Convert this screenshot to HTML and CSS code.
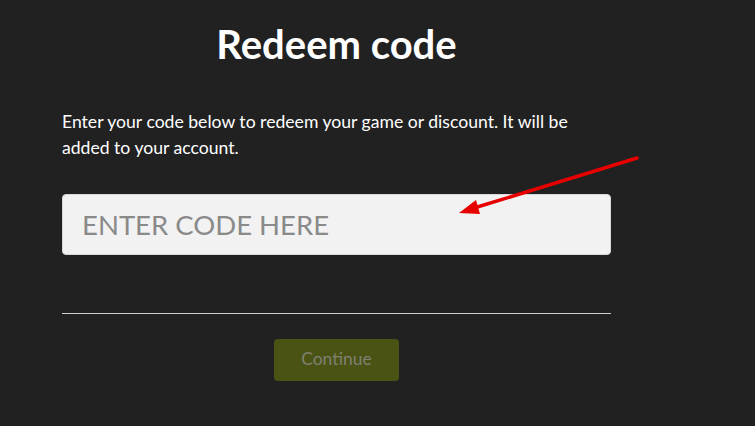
FILE: index.html
```html
<!DOCTYPE html>
<html>
<head>
<meta charset="utf-8">
<link rel="stylesheet" href="styles.css">
</head>
<body>
<main class="redeem">
  <h1 class="title">Redeem code</h1>
  <p class="intro">Enter your code below to redeem your game or discount. It will be added to your account.</p>
  <input class="code-input" type="text" placeholder="ENTER CODE HERE">
  <hr class="divider">
  <div class="actions">
    <button class="continue" type="button">Continue</button>
  </div>
</main>
<svg class="annotation" width="755" height="426" viewBox="0 0 755 426">
  <line x1="637" y1="158" x2="474" y2="208" stroke="#e60000" stroke-width="3.5" stroke-linecap="round"/>
  <polygon points="459,213 476,200 480,214" fill="#e60000"/>
</svg>
</body>
</html>
```
FILE: styles.css
```css
html, body {
  margin: 0;
  padding: 0;
  background: #212121;
  width: 755px;
  height: 426px;
  overflow: hidden;
  font-family: Lato, "Open Sans", sans-serif;
}
.redeem {
  display: flex;
  flex-direction: column;
  width: 549px;
  margin-left: 62px;
  padding-top: 20px;
}
.title {
  margin: 0;
  font-size: 40px;
  font-weight: 700;
  line-height: 48px;
  color: #ffffff;
  text-align: center;
}
.intro {
  margin: 41px 0 0 0;
  font-size: 17.6px;
  line-height: 26px;
  color: #ffffff;
}
.code-input {
  box-sizing: border-box;
  margin-top: 33px;
  height: 61px;
  width: 549px;
  border: 1px solid #d8d8d8;
  border-radius: 4px;
  background: #f2f2f2;
  padding: 0 19px;
  font-family: Lato, sans-serif;
  font-size: 27.5px;
  color: #333;
  outline: none;
}
.code-input::placeholder {
  color: #8a8a8a;
  opacity: 1;
}
.divider {
  margin: 58px 0 0 0;
  border: 0;
  height: 1px;
  background: #cfcfcf;
}
.actions {
  display: flex;
  justify-content: center;
  margin-top: 25px;
}
.continue {
  width: 125px;
  height: 42px;
  border: 0;
  border-radius: 4px;
  background: #4a5314;
  color: #7e8070;
  font-family: Lato, sans-serif;
  font-size: 17.5px;
  font-weight: 400;
  padding: 0 0 3px 0;
}
.annotation {
  position: absolute;
  left: 0;
  top: 0;
  pointer-events: none;
}
```
